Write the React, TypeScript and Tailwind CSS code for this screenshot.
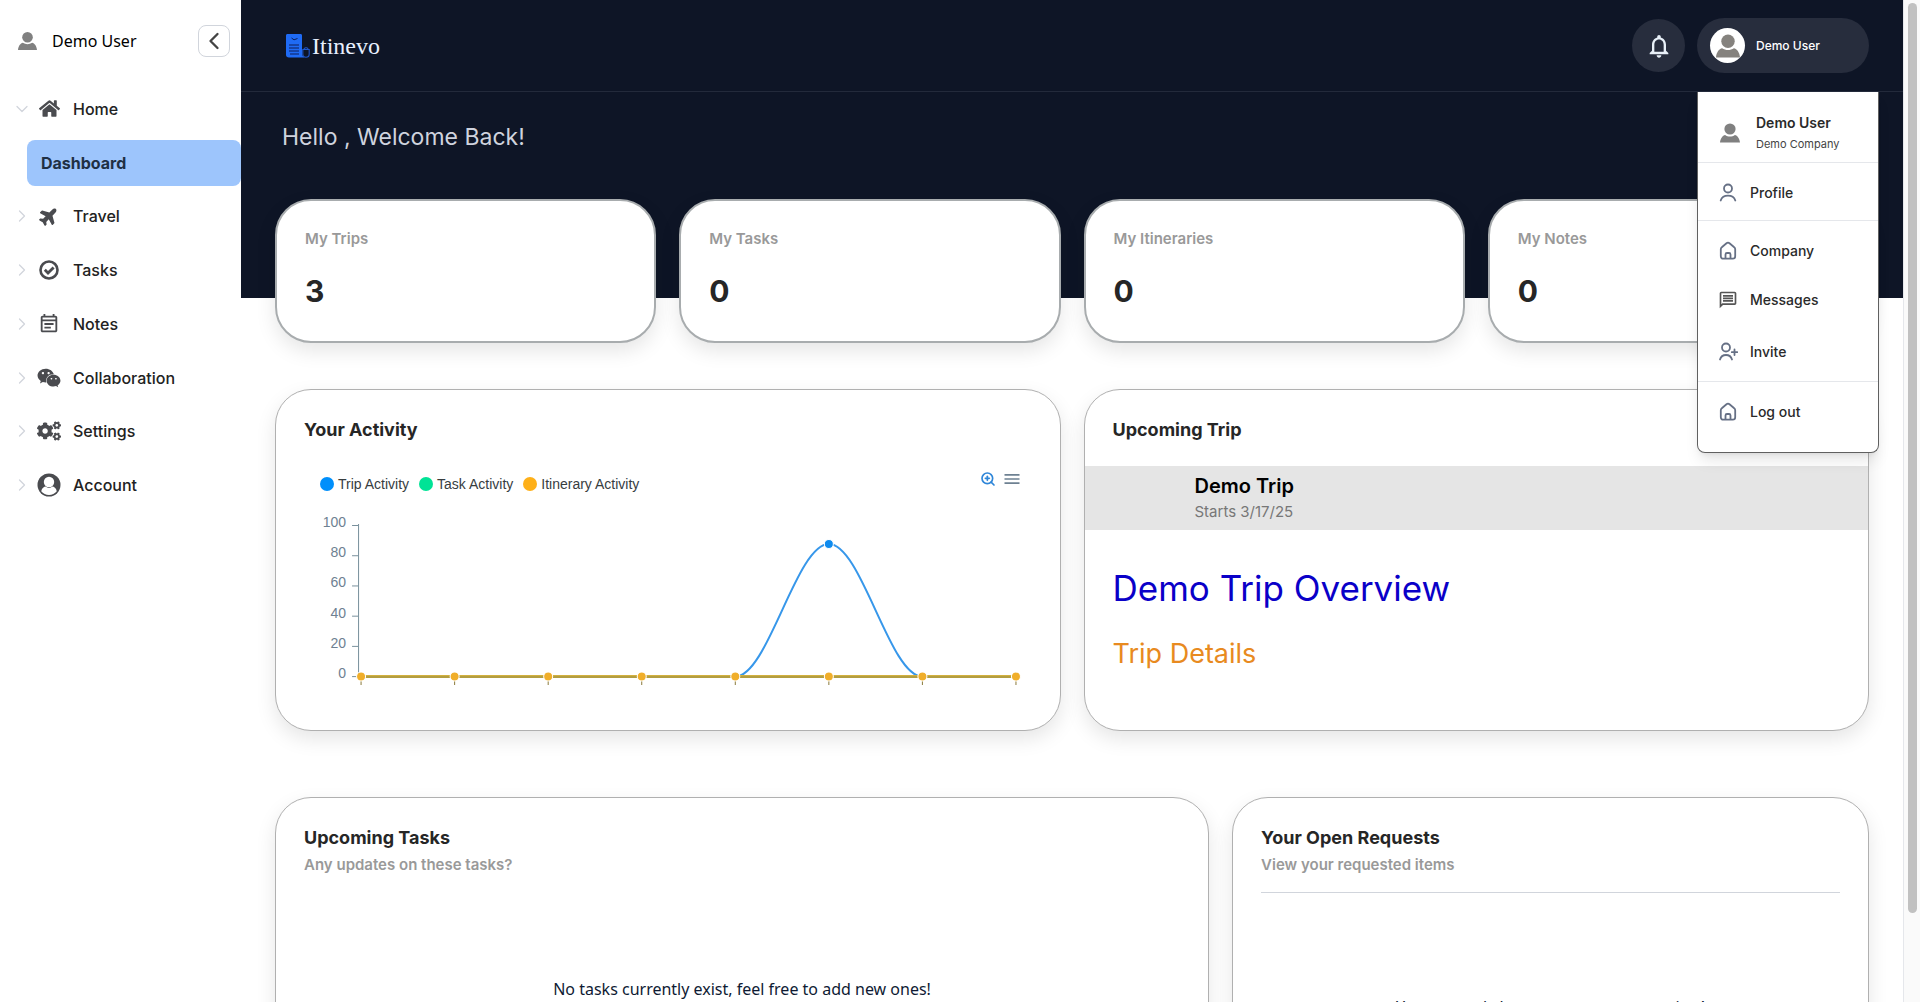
import React from "react";
import { FaCogs, FaHome, FaPlane, FaWeixin } from "react-icons/fa";
import {
    MdMenu,
    MdNotificationsNone,
    MdOutlineEventNote,
    MdOutlineMessage,
} from "react-icons/md";
import { ChevronDown, ChevronLeft, ChevronRight, ZoomIn } from "lucide-react";

interface IconProps {
    className?: string;
}

const PersonIcon: React.FC<IconProps> = ({ className }) => (
    <svg viewBox="0 0 20 20" fill="currentColor" className={className}>
        <circle cx="10" cy="6" r="5.6" />
        <path d="M0 19.5c.4-4.300 2.600-7.100 5.100-7.600 2.900 2 6.900 2 9.800 0 2.500.5 4.700 3.300 5.100 7.600z" />
    </svg>
);

const AccountIcon: React.FC<IconProps> = ({ className }) => (
    <svg viewBox="0 0 24 24" className={className}>
        <circle cx="12" cy="12" r="11.500" fill="currentColor" />
        <path
            d="M4.200 18.200C5 15 7 13.800 8.600 13.600c2 1.700 4.800 1.700 6.800 0 1.600.2 3.600 1.400 4.400 4.600a10 10 0 0 1-15.600 0z"
            fill="#fff"
        />
        <circle cx="12" cy="9" r="5.200" fill="#fff" />
    </svg>
);

const CheckIcon: React.FC<IconProps> = ({ className }) => (
    <svg
        viewBox="0 0 20 20"
        fill="none"
        stroke="currentColor"
        className={className}
    >
        <circle cx="10" cy="10" r="8.500" strokeWidth="2.600" />
        <path d="M5.800 9.800l3.200 3.200 5.600-5.600" strokeWidth="2.800" />
    </svg>
);

const ProfileIcon: React.FC<IconProps> = ({ className }) => (
    <svg
        viewBox="0 0 20 20"
        fill="none"
        stroke="currentColor"
        strokeWidth="1.800"
        strokeLinecap="round"
        className={className}
    >
        <circle cx="10" cy="5.500" r="4" />
        <path d="M2.700 17.500c1-3 3.800-4.800 7.300-4.800s6.300 1.800 7.300 4.800" />
    </svg>
);

const HouseIcon: React.FC<IconProps> = ({ className }) => (
    <svg
        viewBox="0 0 20 20"
        fill="none"
        stroke="currentColor"
        strokeWidth="1.800"
        strokeLinejoin="round"
        className={className}
    >
        <path d="M2.800 8.200c0-.8.3-1.500 1-2l4.700-3.900a2.400 2.400 0 0 1 3 0l4.700 3.900c.7.500 1 1.200 1 2v7.100c0 1.400-1 2.400-2.400 2.400H5.200c-1.400 0-2.400-1-2.400-2.400z" />
        <path d="M7.500 17.500v-4c0-.9.600-1.500 1.500-1.500h2c.9 0 1.500.6 1.500 1.500v4" />
    </svg>
);

const InviteIcon: React.FC<IconProps> = ({ className }) => (
    <svg
        viewBox="0 0 20 20"
        fill="none"
        stroke="currentColor"
        strokeWidth="1.800"
        strokeLinecap="round"
        className={className}
    >
        <circle cx="8" cy="5.500" r="4" />
        <path d="M2 17.500c.8-2.900 3.100-4.500 6-4.500s5.200 1.600 6 4.500" />
        <path d="M16.500 7.500v5.500M13.800 10.200h5.500" />
    </svg>
);

const Logo = () => (
    <a href="#" className="flex items-center gap-px">
        <svg viewBox="0 0 26 26" className="w-[26px] h-[26px]">
            <path
                d="M1 2.500C1 1.600 1.600 1 2.500 1h13c1 0 1.500.6 1.500 1.500V20c0 2 .8 3.500 2.500 4.500H4c-1.800 0-3-1-3-2.700z"
                fill="#1f6bf5"
            />
            <path
                d="M6.500 5l2.500 1.800 3.500-1.300M4 12h10M4 15h10M4 18h10M5 21h9"
                stroke="#0e1f5a"
                strokeWidth="1"
                fill="none"
            />
            <path
                d="M17.800 16.500h6.400v4.500c0 2.200-1.200 3.300-3.200 3.300s-3.200-1.100-3.200-3.300zM19 16.300c-.4-1.500 3.800-2.500 4-.2"
                stroke="#1f57cc"
                strokeWidth="1.100"
                fill="#0e1526"
            />
        </svg>
        <span className="font-['Liberation_Serif',serif] text-2xl leading-6 text-[#e8f0ff]">
            Itinevo
        </span>
    </a>
);

const navItems = [
    { label: "Travel", icon: <FaPlane className="w-5 h-5 -rotate-45" /> },
    { label: "Tasks", icon: <CheckIcon className="w-5 h-5" /> },
    { label: "Notes", icon: <MdOutlineEventNote className="w-[22px] h-[22px]" /> },
    { label: "Collaboration", icon: <FaWeixin className="w-6 h-6" /> },
    { label: "Settings", icon: <FaCogs className="w-6 h-6" /> },
    { label: "Account", icon: <AccountIcon className="w-6 h-6" /> },
];

interface NavRowProps {
    label: string;
    icon: React.ReactNode;
    open?: boolean;
}

const NavRow: React.FC<NavRowProps> = ({ label, icon, open }) => (
    <a href="#" className="flex items-center pl-3">
        {open ? (
            <ChevronDown className="w-5 h-5 text-gray-300" strokeWidth={1.5} />
        ) : (
            <ChevronRight className="w-5 h-5 text-gray-300" strokeWidth={1.5} />
        )}
        <span className="flex justify-center w-6 ml-[5px] text-[#4a4b4f]">
            {icon}
        </span>
        <span className="ml-3 text-base text-[#222]">{label}</span>
    </a>
);

const Sidebar = () => (
    <aside className="w-[241px] shrink-0 bg-white">
        <div className="flex items-center h-[82px] pl-[18px] pr-[11px]">
            <PersonIcon className="w-[19px] h-5 text-[#808080]" />
            <span className="ml-[15px] font-['Noto_Sans',sans-serif] text-base text-black">
                Demo User
            </span>
            <button
                aria-label="Collapse menu"
                className="flex items-center justify-center w-8 h-8 ml-auto border border-gray-300 rounded-lg"
            >
                <ChevronLeft className="w-7 h-7 text-[#444]" strokeWidth={2} />
            </button>
        </div>
        <nav className="grid grid-rows-8 h-[430px] font-medium">
            <NavRow
                open
                label="Home"
                icon={<FaHome className="w-[21px] h-[21px]" />}
            />
            <div className="flex items-center pl-[27px]">
                <a
                    href="#"
                    className="flex items-center w-full h-[46px] rounded-lg bg-[#9dc5fc] pl-[14px] font-bold text-[#1f3044]"
                >
                    Dashboard
                </a>
            </div>
            {navItems.map((item) => (
                <NavRow key={item.label} label={item.label} icon={item.icon} />
            ))}
        </nav>
    </aside>
);

const UserMenu = () => (
    <div className="absolute left-0 top-[74px] z-10 w-[182px] bg-white border border-t-0 border-[#606060] rounded-b-lg shadow-lg text-[#2a2a2a]">
        <div className="flex items-center h-[71px] pt-3 pl-[22px] border-b border-gray-200">
            <PersonIcon className="w-5 h-5 text-[#808080]" />
            <div className="ml-4">
                <p className="text-sm leading-[22px] font-semibold">Demo User</p>
                <p className="text-[11px] leading-5 text-[#444]">Demo Company</p>
            </div>
        </div>
        <div className="flex flex-col text-sm font-medium">
            <a
                href="#"
                className="flex items-center h-[58px] pt-0.5 pl-5 gap-3 border-b border-gray-200"
            >
                <ProfileIcon className="w-5 h-5 text-[#667085]" />
                Profile
            </a>
            <div className="flex flex-col pt-1 border-b border-gray-200 h-[161px]">
                <a href="#" className="flex items-center h-[52px] pl-5 gap-3">
                    <HouseIcon className="w-5 h-5 text-[#667085]" />
                    Company
                </a>
                <a href="#" className="flex items-center h-12 pl-5 gap-3">
                    <MdOutlineMessage className="w-5 h-5 text-[#555]" />
                    Messages
                </a>
                <a href="#" className="flex items-center h-[58px] pl-5 gap-3">
                    <InviteIcon className="w-5 h-5 text-[#667085]" />
                    Invite
                </a>
            </div>
            <a href="#" className="flex items-center h-[60px] mb-[10px] pl-5 gap-3">
                <HouseIcon className="w-5 h-5 text-[#667085]" />
                Log out
            </a>
        </div>
    </div>
);

const Header = () => (
    <header className="flex items-center justify-between h-[92px] pl-11 pr-[34px] border-b border-[#232a3b]">
        <Logo />
        <div className="flex items-center gap-3">
            <button
                aria-label="Notifications"
                className="flex items-center justify-center w-[53px] h-[53px] rounded-full bg-[#272d3d]"
            >
                <MdNotificationsNone className="w-7 h-7 text-[#e8f0f8]" />
            </button>
            <div className="relative">
                <button className="flex items-center w-[172px] h-[55px] rounded-full bg-[#272d3d] pl-[13px]">
                    <span className="flex items-center justify-center w-[35px] h-[35px] rounded-full bg-white">
                        <PersonIcon className="w-6 h-6 text-[#85827e]" />
                    </span>
                    <span className="ml-[11px] text-xs font-medium text-white">
                        Demo User
                    </span>
                </button>
                <UserMenu />
            </div>
        </div>
    </header>
);

const stats = [
    { label: "My Trips", value: 3 },
    { label: "My Tasks", value: 0 },
    { label: "My Itineraries", value: 0 },
    { label: "My Notes", value: 0 },
];

const legend = [
    { label: "Trip Activity", dot: "bg-[#008ffb]" },
    { label: "Task Activity", dot: "bg-[#00e396]" },
    { label: "Itinerary Activity", dot: "bg-[#feb019]" },
];

const yLabels = [100, 80, 60, 40, 20, 0];
const points = [0, 1, 2, 3, 4, 5, 6, 7].map((i) => 57 + i * 93.5);

const ActivityChart = () => (
    <svg viewBox="0 0 727 180" className="w-full">
        <g fill="#6e8192" fontFamily="Liberation Sans, sans-serif" fontSize="14">
            {yLabels.map((label, i) => (
                <text key={label} x="42" y={17 + i * 30.2} textAnchor="end">
                    {label}
                </text>
            ))}
        </g>
        <g stroke="#78909c">
            <path d="M54.500 14v152" />
            {yLabels.map((label, i) => (
                <path key={label} d={`M48 ${15.5 + i * 30.2}h6`} />
            ))}
            {points.map((x) => (
                <path key={x} d={`M${x} 171v4`} stroke="#8a7a3a" />
            ))}
        </g>
        <path
            d="M431 166.500C463.700 166.500 491.800 34 524.500 34S585.300 166.500 618 166.500"
            fill="none"
            stroke="#3797ea"
            strokeWidth="2"
        />
        <path d="M57 166.500H711.500" stroke="#d3b13f" strokeWidth="3" />
        <path d="M57 167H711.500" stroke="#948b45" />
        {points.map((x) => (
            <circle
                key={x}
                cx={x}
                cy="166.500"
                r="4.500"
                fill="#f0ae2a"
                stroke="#fff"
            />
        ))}
        <circle cx="524.500" cy="34" r="4.500" fill="#0e8bef" stroke="#fff" />
    </svg>
);

interface CardProps {
    title: string;
    subtitle?: string;
    className?: string;
    children?: React.ReactNode;
}

const Card: React.FC<CardProps> = ({ title, subtitle, className, children }) => (
    <section
        className={`bg-white border border-[#b0b0b0] rounded-[36px] shadow-[0_8px_20px_rgba(0,0,0,0.1)] ${className}`}
    >
        <h2 className="px-7 pt-[27px] text-lg leading-[26px] font-bold text-[#262626]">
            {title}
        </h2>
        {subtitle && (
            <p className="px-7 mt-px text-[15px] leading-[26px] font-semibold text-[#999]">
                {subtitle}
            </p>
        )}
        {children}
    </section>
);

const App = () => {
    return (
        <div className="flex h-screen overflow-hidden bg-white font-['Inter',sans-serif]">
            <Sidebar />
            <main className="flex-1 min-w-0">
                <div className="h-[298px] bg-[#0e1526]">
                    <Header />
                    <h1 className="pt-[27px] pl-[41px] text-[23px] leading-9 text-[#cfd3de]">
                        Hello , Welcome Back!
                    </h1>
                </div>
                <div className="px-[34px] -mt-[99px]">
                    <div className="grid grid-cols-4 gap-[23px]">
                        {stats.map((stat) => (
                            <div
                                key={stat.label}
                                className="h-[144px] px-7 pt-[26px] bg-white border-2 border-[#a8acae] rounded-[36px] shadow-[0_8px_20px_rgba(0,0,0,0.1)]"
                            >
                                <p className="text-[15px] leading-6 font-semibold text-[#999]">
                                    {stat.label}
                                </p>
                                <p className="mt-[22px] text-3xl leading-9 font-bold text-[#262626]">
                                    {stat.value}
                                </p>
                            </div>
                        ))}
                    </div>

                    <div className="grid grid-cols-2 gap-[23px] mt-[46px]">
                        <Card title="Your Activity" className="h-[342px]">
                            <div className="flex items-start justify-between px-7 mt-[26px]">
                                <ul className="flex gap-[10px] pl-4 pt-[5px] font-['Liberation_Sans',sans-serif] text-sm text-[#373d3f]">
                                    {legend.map((item) => (
                                        <li
                                            key={item.label}
                                            className="flex items-center gap-1"
                                        >
                                            <span
                                                className={`w-[14px] h-[14px] rounded-full ${item.dot}`}
                                            />
                                            {item.label}
                                        </li>
                                    ))}
                                </ul>
                                <div className="flex items-center gap-[6px] pr-[10px]">
                                    <button aria-label="Zoom">
                                        <ZoomIn
                                            className="w-4 h-4 text-[#2f86d8]"
                                            strokeWidth={2.5}
                                        />
                                    </button>
                                    <button aria-label="Chart menu">
                                        <MdMenu className="w-5 h-5 text-[#6e8192]" />
                                    </button>
                                </div>
                            </div>
                            <div className="px-7 mt-4">
                                <ActivityChart />
                            </div>
                        </Card>

                        <Card title="Upcoming Trip" className="h-[342px]">
                            <div className="flex flex-col justify-center h-16 mt-[23px] pt-1 pl-[110px] bg-[#e5e5e5]">
                                <p className="text-xl leading-6 font-semibold text-black">
                                    Demo Trip
                                </p>
                                <p className="text-[15px] leading-7 text-[#777]">
                                    Starts 3/17/25
                                </p>
                            </div>
                            <p className="px-7 mt-[35px] text-[35px] leading-[46px] text-[#0a00c8]">
                                Demo Trip Overview
                            </p>
                            <p className="px-7 mt-[25px] text-[27px] leading-9 text-[#e88a20]">
                                Trip Details
                            </p>
                        </Card>
                    </div>

                    <div className="grid grid-cols-[22fr_15fr] gap-[23px] mt-[66px]">
                        <Card
                            title="Upcoming Tasks"
                            subtitle="Any updates on these tasks?"
                            className="h-[342px]"
                        >
                            <p className="mt-[99px] text-center font-['Noto_Sans',sans-serif] text-base text-[#0e1a33]">
                                No tasks currently exist, feel free to add new
                                ones!
                            </p>
                        </Card>
                        <Card
                            title="Your Open Requests"
                            subtitle="View your requested items"
                            className="h-[342px]"
                        >
                            <hr className="mx-7 mt-[14px] border-gray-300" />
                            <p className="mt-[102px] text-center font-['Noto_Sans',sans-serif] text-base text-[#0e1a33]">
                                You currently have no requests to review!
                            </p>
                        </Card>
                    </div>
                </div>
            </main>
            {/* scroll track */}
            <div className="w-[17px] shrink-0 bg-[#fafafa] border-l border-gray-200 pt-[3px]">
                <div className="w-[9px] h-[910px] mx-auto rounded-full bg-[#c1c1c1]" />
            </div>
        </div>
    );
};

export default App;
